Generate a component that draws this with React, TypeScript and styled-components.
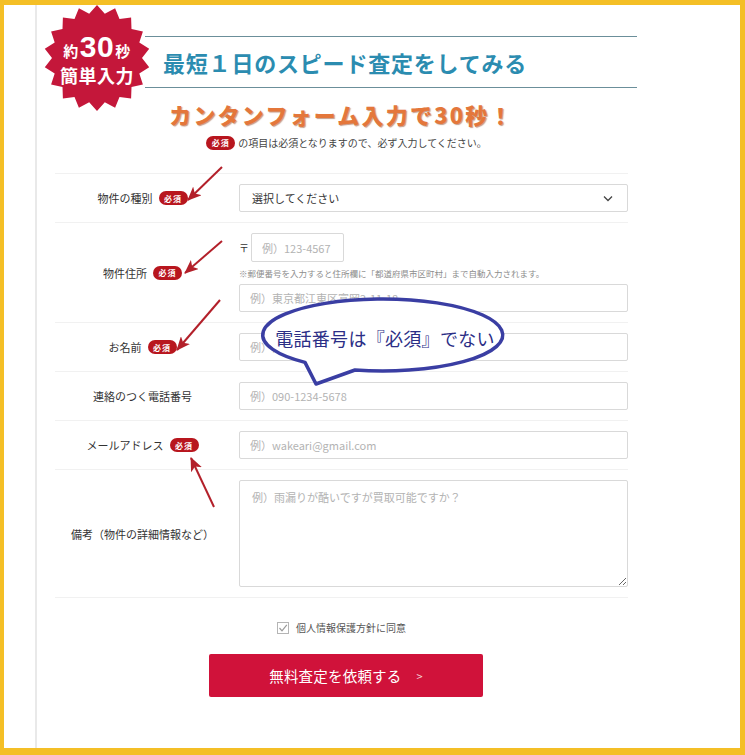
import styled, { createGlobalStyle } from "styled-components";

const GlobalStyle = createGlobalStyle`
  html, body {
    margin: 0;
    padding: 0;
    background: #fff;
  }
  body {
    font-family: "Noto Sans CJK JP", "Noto Sans", sans-serif;
    color: #333;
  }
`;

const Frame = styled.div`
  position: relative;
  box-sizing: border-box;
  width: 745px;
  height: 755px;
  border-style: solid;
  border-color: #f4bf26;
  border-width: 5px 5px 7px 4px;
  background: #fff;
  overflow: hidden;
`;

const Sheet = styled.div`
  margin-left: 31px;
  height: 100%;
  border-left: 2px solid #e9e9e9;
`;

const Header = styled.div`
  position: relative;
  padding-top: 31px;
`;

const TitleBand = styled.div`
  box-sizing: border-box;
  margin-left: 108px;
  width: 492px;
  height: 52px;
  border-top: 1px solid #6b8f9a;
  border-bottom: 1px solid #6b8f9a;
  display: flex;
  align-items: center;
  padding-left: 18px;
  font-size: 22px;
  font-weight: 700;
  letter-spacing: 0.8px;
  color: #2b8cb0;
`;

const Seal = styled.div`
  position: absolute;
  left: 5px;
  top: 0;
  width: 110px;
  height: 106px;
  display: flex;
  flex-direction: column;
  align-items: center;
  justify-content: center;
  color: #fff;
  font-weight: 700;
  svg {
    position: absolute;
    inset: 0;
  }
`;

const SealLine = styled.div<{ $size: number }>`
  position: relative;
  display: flex;
  align-items: baseline;
  font-size: ${(p) => p.$size}px;
  line-height: 1;
  letter-spacing: 0.5px;
`;

const SealNum = styled.span`
  font-family: "Liberation Sans", Arial, sans-serif;
  font-size: 30px;
  font-weight: 700;
  margin: 0 1px;
`;

const Form = styled.div`
  margin-left: 18px;
  width: 573px;
`;

const CatchCopy = styled.div`
  margin-top: 12px;
  text-align: center;
  font-size: 22px;
  line-height: 28px;
  font-weight: 900;
  letter-spacing: 2.2px;
  color: #e4773b;
  text-shadow: 1px 1px 1px rgba(140, 60, 20, 0.5);
`;

const Notice = styled.div`
  margin-top: 7px;
  display: flex;
  justify-content: center;
  align-items: center;
  gap: 3px;
  font-size: 10px;
  line-height: 16px;
  color: #444;
  padding-left: 10px;
`;

const Req = styled.span`
  display: inline-flex;
  align-items: center;
  justify-content: center;
  width: 29px;
  height: 14px;
  border-radius: 7px;
  background: #b8161e;
  color: #fff;
  font-size: 8px;
  font-weight: 700;
  letter-spacing: 1px;
`;

const Rows = styled.div`
  margin-top: 22px;
  border-top: 1px solid #f1f1f1;
`;

const Row = styled.div`
  display: grid;
  grid-template-columns: 175px 389px;
  column-gap: 9px;
  padding: 10px 0;
  border-bottom: 1px solid #f1f1f1;
`;

const Label = styled.div`
  display: flex;
  align-items: center;
  justify-content: center;
  gap: 6px;
  font-size: 11px;
  color: #333;
`;

const Field = styled.div`
  display: flex;
  flex-direction: column;
`;

const Input = styled.input<{ $w?: number }>`
  box-sizing: border-box;
  width: ${(p) => (p.$w ? `${p.$w}px` : "100%")};
  height: 28px;
  border: 1px solid #d9d9d9;
  border-radius: 2px;
  padding: 0 10px;
  font-family: inherit;
  font-size: 11px;
  color: #333;
  background: #fff;
  outline: none;
  &::placeholder {
    color: #b3b3b3;
  }
`;

const SelectBox = styled.div`
  box-sizing: border-box;
  height: 28px;
  border: 1px solid #d9d9d9;
  border-radius: 2px;
  padding: 0 14px 0 12px;
  display: flex;
  align-items: center;
  justify-content: space-between;
  font-size: 11px;
  color: #333;
`;

const PostalLine = styled.div`
  display: flex;
  align-items: center;
  gap: 2px;
  font-size: 10px;
  color: #333;
`;

const Hint = styled.div`
  margin: 5px 0;
  font-size: 8.5px;
  line-height: 12px;
  color: #8d8d8d;
  white-space: nowrap;
`;

const TextArea = styled.textarea`
  box-sizing: border-box;
  width: 100%;
  height: 107px;
  border: 1px solid #d9d9d9;
  border-radius: 2px;
  padding: 8px 12px;
  font-family: inherit;
  font-size: 11px;
  outline: none;
  &::placeholder {
    color: #b3b3b3;
  }
`;

const Agree = styled.label`
  margin-top: 23px;
  display: flex;
  justify-content: center;
  align-items: center;
  gap: 7px;
  font-size: 10px;
  line-height: 14px;
  color: #555;
`;

const CheckBox = styled.span`
  box-sizing: border-box;
  width: 12px;
  height: 12px;
  border: 1px solid #b5b5b5;
  display: inline-flex;
  align-items: center;
  justify-content: center;
  background: #fff;
`;

const Submit = styled.button`
  display: flex;
  align-items: center;
  justify-content: center;
  margin: 19px 0 0 154px;
  width: 274px;
  height: 43px;
  border: none;
  border-radius: 2px;
  background: #d0123a;
  color: #fff;
  font-family: inherit;
  font-size: 14.5px;
  letter-spacing: 0.2px;
  span {
    margin-left: 15px;
    font-size: 11px;
    color: rgba(255, 255, 255, 0.8);
  }
`;

const Overlay = styled.div`
  position: absolute;
  left: -4px;
  top: -5px;
  width: 745px;
  height: 755px;
  pointer-events: none;
`;

const BubbleText = styled.div`
  position: absolute;
  left: 263px;
  top: 302px;
  width: 244px;
  height: 72px;
  display: flex;
  align-items: center;
  justify-content: center;
  font-size: 18px;
  color: #2b2e86;
  letter-spacing: 0.3px;
`;

const sealPoints = (() => {
  const n = 18;
  const pts: string[] = [];
  for (let i = 0; i < n * 2; i++) {
    const r = i % 2 === 0 ? 53 : 45;
    const a = (Math.PI * i) / n - Math.PI / 2;
    pts.push(`${(55 + r * Math.cos(a)).toFixed(1)},${(53 + r * Math.sin(a)).toFixed(1)}`);
  }
  return pts.join(" ");
})();

const arrows = [
  [222, 167, 188, 200],
  [222, 241, 185, 273],
  [220, 300, 177, 350],
  [214, 507, 191, 458],
];

const App = () => {
  return (
    <>
      <GlobalStyle />
      <Frame>
        <Sheet>
          <Header>
            <TitleBand>最短１日のスピード査定をしてみる</TitleBand>
            <Seal>
              <svg width="110" height="106" viewBox="0 0 110 106">
                <polygon points={sealPoints} fill="#c4173a" />
              </svg>
              <SealLine $size={15}>
                約<SealNum>30</SealNum>秒
              </SealLine>
              <SealLine $size={18} style={{ marginTop: 4 }}>
                簡単入力
              </SealLine>
            </Seal>
          </Header>

          <Form>
            <CatchCopy>カンタンフォーム入力で30秒！</CatchCopy>
            <Notice>
              <Req>必須</Req>の項目は必須となりますので、必ず入力してください。
            </Notice>

            <Rows>
              <Row>
                <Label>
                  物件の種別<Req>必須</Req>
                </Label>
                <SelectBox>
                  選択してください
                  <svg width="10" height="7" viewBox="0 0 10 7">
                    <path d="M1 1.5 L5 5.5 L9 1.5" fill="none" stroke="#444" strokeWidth="1.3" />
                  </svg>
                </SelectBox>
              </Row>
              <Row>
                <Label>
                  物件住所<Req>必須</Req>
                </Label>
                <Field>
                  <PostalLine>
                    〒<Input $w={93} style={{ height: 29 }} placeholder="例）123-4567" />
                  </PostalLine>
                  <Hint>※郵便番号を入力すると住所欄に「都道府県市区町村」まで自動入力されます。</Hint>
                  <Input placeholder="例）東京都江東区富岡2-11-18" />
                </Field>
              </Row>
              <Row>
                <Label>
                  お名前<Req>必須</Req>
                </Label>
                <Input placeholder="例）山田太郎" />
              </Row>
              <Row>
                <Label>連絡のつく電話番号</Label>
                <Input placeholder="例）090-1234-5678" />
              </Row>
              <Row>
                <Label>
                  メールアドレス<Req>必須</Req>
                </Label>
                <Input placeholder="例）wakeari@gmail.com" />
              </Row>
              <Row>
                <Label>備考（物件の詳細情報など）</Label>
                <TextArea placeholder="例）雨漏りが酷いですが買取可能ですか？" />
              </Row>
            </Rows>

            <Agree>
              <CheckBox>
                <svg width="10" height="10" viewBox="0 0 10 10">
                  <path d="M1.5 5 L4 7.8 L8.8 1.8" fill="none" stroke="#9a9a9a" strokeWidth="1.2" />
                </svg>
              </CheckBox>
              個人情報保護方針に同意
            </Agree>

            <Submit>
              無料査定を依頼する<span>&gt;</span>
            </Submit>
          </Form>
        </Sheet>

        <Overlay>
          <svg width="745" height="755" viewBox="0 0 745 755">
            <defs>
              <marker
                id="head"
                markerUnits="userSpaceOnUse"
                markerWidth="16"
                markerHeight="12"
                refX="13"
                refY="6"
                orient="auto"
              >
                <path d="M0 0 L14 6 L0 12 L3.5 6 Z" fill="#b3202a" />
              </marker>
            </defs>
            {arrows.map(([x1, y1, x2, y2], i) => (
              <line
                key={i}
                x1={x1}
                y1={y1}
                x2={x2}
                y2={y2}
                stroke="#b3202a"
                strokeWidth="2"
                markerEnd="url(#head)"
              />
            ))}
            <path
              d="M355 370 A120 36 0 1 0 305 362.4 L316 384 Z"
              fill="#fff"
              stroke="#3a3ea3"
              strokeWidth="3.5"
              strokeLinejoin="round"
            />
          </svg>
          <BubbleText>電話番号は『必須』でない</BubbleText>
        </Overlay>
      </Frame>
    </>
  );
};

export default App;
